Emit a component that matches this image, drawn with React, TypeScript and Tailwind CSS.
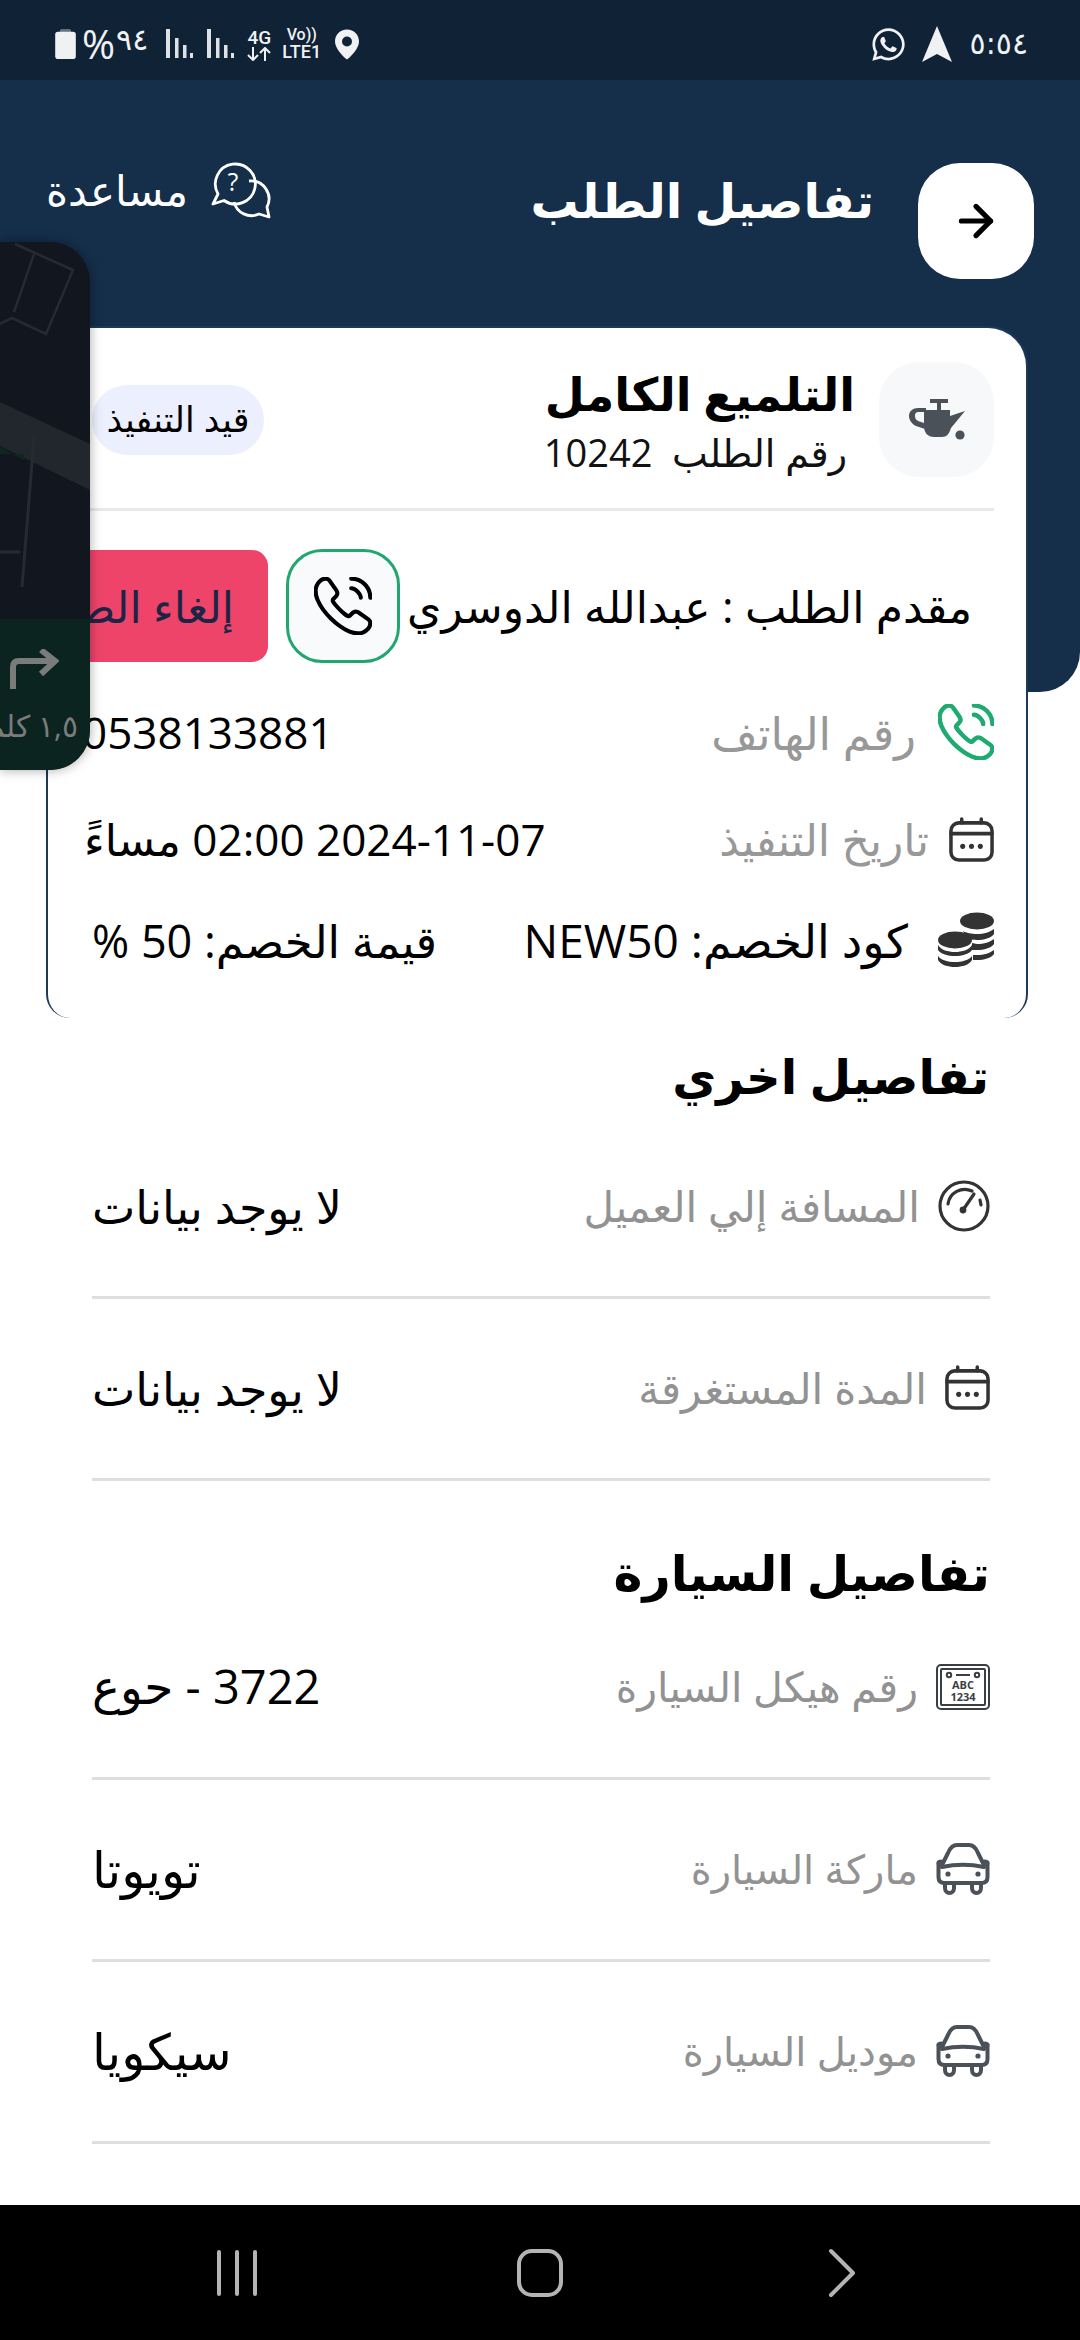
import type { ReactNode } from "react";
import { ArrowRight } from "lucide-react";
import { FaWhatsapp } from "react-icons/fa";

const font = "font-['Open_Sans','DejaVu_Sans',sans-serif]";

function Phone({ c, sw }: { c: string; sw: number }) {
  return (
    <svg viewBox="1.4 1.4 21.2 21.2" className={c} fill="none" stroke="currentColor" strokeWidth={sw} strokeLinecap="round" strokeLinejoin="round">
      <path d="M21.97 18.33c0 .36-.08.73-.25 1.09-.17.36-.39.7-.68 1.02-.49.54-1.03.93-1.64 1.18-.6.25-1.25.38-1.95.38-1.02 0-2.11-.24-3.26-.73s-2.3-1.15-3.44-1.98a28.75 28.75 0 0 1-3.28-2.8 28.414 28.414 0 0 1-2.79-3.27c-.82-1.14-1.48-2.28-1.96-3.41C2.24 8.67 2 7.58 2 6.54c0-.68.12-1.33.36-1.93.24-.61.62-1.17 1.15-1.67C4.15 2.31 4.85 2 5.59 2c.28 0 .56.06.81.18.26.12.49.3.67.56l2.32 3.27c.18.25.31.48.4.7.09.21.14.42.14.61 0 .24-.07.48-.21.71-.13.23-.32.47-.56.71l-.76.79c-.11.11-.16.24-.16.4 0 .08.01.15.03.23.03.08.06.14.08.2.18.33.49.76.93 1.28.45.52.93 1.05 1.45 1.58.54.53 1.06 1.02 1.59 1.47.52.44.95.74 1.29.92.05.02.11.05.18.08.08.03.16.04.25.04.17 0 .3-.06.41-.17l.76-.75c.25-.25.49-.44.72-.56.23-.14.46-.21.71-.21.19 0 .39.04.61.13.22.09.45.22.7.39l3.31 2.35c.26.18.44.39.55.64.1.25.16.5.16.78z" />
      <path d="M18.5 9c0-.6-.47-1.52-1.17-2.27-.64-.69-1.49-1.23-2.33-1.23M22 9c0-3.87-3.13-7-7-7" />
    </svg>
  );
}
function Calendar() {
  return (
    <svg viewBox="0 0 46 46" className="w-[45px] h-[45px]" fill="none" stroke="#333" strokeWidth="3.6" strokeLinecap="round">
      <rect x="2" y="6" width="42" height="38" rx="8" />
      <path d="M2 17h42M13 2v4M33 2v4" />
      <circle cx="14" cy="30" r="2.6" fill="#333" stroke="none" />
      <circle cx="23" cy="30" r="2.6" fill="#333" stroke="none" />
      <circle cx="32" cy="30" r="2.6" fill="#333" stroke="none" />
    </svg>
  );
}
function Coins() {
  return (
    <svg viewBox="0 0 56 56" className="w-[56px] h-[56px]" fill="#333">
      <ellipse cx="39" cy="9" rx="17" ry="8.5" />
      <path d="M25 19c3 2 9 3 14 3 7 0 13-2 17-5v5c-3 4-10 6-17 6-4 0-8-1-11-2zM34 31c2 0 3 1 5 1 7 0 13-2 17-5v5c-3 4-10 6-17 6h-5zM35 43h4c7 0 13-2 17-5v4c-3 4-10 6-17 6h-4z" />
      <ellipse cx="17" cy="28" rx="17" ry="8.5" />
      <path d="M0 33c3 5 10 7 17 7s14-2 17-7v5c-3 4-10 6-17 6S3 42 0 38zM0 44c3 4 10 6 17 6s14-2 17-6v4c-3 5-10 7-17 7S3 53 0 48z" />
    </svg>
  );
}
function Gauge() {
  return (
    <svg viewBox="0 0 52 52" className="w-[52px] h-[52px]" fill="none" stroke="#333" strokeWidth="3.2" strokeLinecap="round">
      <circle cx="26" cy="26" r="24" />
      <path d="M10 24a17 17 0 0 1 24-13M42 20l1 5" />
      <path d="M25 30 36 14" />
      <circle cx="25" cy="30" r="3.4" fill="#333" stroke="none" />
    </svg>
  );
}
function Plate() {
  return (
    <svg viewBox="0 0 54 46" className="w-[54px] h-[46px]" fill="none" stroke="#3a3f46" strokeWidth="2">
      <rect x="1" y="1" width="52" height="44" rx="4" />
      <rect x="5" y="5" width="44" height="36" rx="1" />
      <circle cx="13" cy="11" r="2.2" />
      <circle cx="41" cy="11" r="2.2" />
      <path d="M20 11h14" />
      <text x="27" y="25" textAnchor="middle" fontSize="11" fontWeight="700" fill="#3a3f46" stroke="none" fontFamily="'Open Sans',sans-serif">ABC</text>
      <text x="27" y="37" textAnchor="middle" fontSize="11" fontWeight="700" fill="#3a3f46" stroke="none" fontFamily="'Open Sans',sans-serif">1234</text>
    </svg>
  );
}
function Car() {
  return (
    <svg viewBox="0 0 54 52" className="w-[54px] h-[52px]" fill="none" stroke="#4b5159" strokeWidth="4" strokeLinejoin="round" strokeLinecap="round">
      <path d="M6 22 12 10c2-5 5-8 9-8h12c4 0 7 3 9 8l6 12" />
      <path d="M2.5 20c0-1 1-1.500 3-1.500M51.500 20c0-1-1-1.500-3-1.500" />
      <path d="M2.500 20v14c0 4 2 6 6 6h37c4 0 6-2 6-6V20" />
      <path d="M6 24c14-3 28-3 42 0" />
      <path d="M9 40v5c0 3 2 5 4.500 5S18 48 18 45v-5M36 40v5c0 3 2 5 4.500 5S45 48 45 45v-5" />
      <circle cx="12" cy="31" r="2.600" fill="#4b5159" stroke="none" />
      <circle cx="42" cy="31" r="2.600" fill="#4b5159" stroke="none" />
    </svg>
  );
}
function OilCan() {
  return (
    <svg viewBox="0 0 56 42" className="w-[56px] h-[42px]" fill="#4b5159">
      <path d="M21 0h18v4h-7v7h-4V4h-7z" />
      <path d="M15 11h26v6l15-5-14 17c-2 6-4 9-9 9H25c-6 0-10-4-10-11z" />
      <path fillRule="evenodd" d="M9 9h8v4h-7c-3 0-4 1-4 4 0 2 1 4 3 5l6 2 1 6-9-3C3 25 0 21 0 17c0-5 4-8 9-8z" />
      <circle cx="51" cy="36" r="4.600" />
    </svg>
  );
}
function ChatHelp() {
  return (
    <svg viewBox="0 0 62 62" className="w-[62px] h-[62px]" fill="none" stroke="#fff" strokeWidth="2.800" strokeLinejoin="round">
      <path d="M8 35 3 45 14 41.500A20 20 0 1 0 8 35z" />
      <path d="M39 22A18 18 0 0 1 57 48L59 58 49 55A18 18 0 0 1 24 43" />
      <text x="23" y="32" textAnchor="middle" fontSize="25" fill="#fff" stroke="none" fontFamily="'Open Sans',sans-serif">?</text>
    </svg>
  );
}
function Bars() {
  return (
    <svg viewBox="0 0 27 30" className="w-[27px] h-[30px]" fill="#dfe2e5">
      <rect width="4" height="29" x="0" />
      <rect width="3.500" height="20" x="9" y="9" />
      <rect width="3.500" height="13" x="17" y="16" />
      <rect width="3" height="5" x="24" y="24" />
    </svg>
  );
}
function Row({ icon, label, value, labelClass, valueClass }: { icon: ReactNode; label: string; value: ReactNode; labelClass: string; valueClass: string }) {
  return (
    <div className="h-[182px] border-b-[3px] border-[#dedede] flex items-center justify-between pb-[2px]">
      <div className="flex items-center gap-[18px]">
        {icon}
        <span className={`${labelClass} text-[#929292] leading-none`}>{label}</span>
      </div>
      <span className={`${valueClass} text-black leading-none`}>{value}</span>
    </div>
  );
}

export default function App() {
  return (
    <div dir="rtl" className={`relative w-[1080px] h-[2340px] overflow-hidden bg-white flex flex-col ${font}`}>
      <div dir="ltr" className="h-[80px] shrink-0 bg-[#102236] flex items-center justify-between pl-[55px] pr-[52px] pt-[8px] text-[#eff1f3]">
        <div className="flex items-center">
          <svg viewBox="0 0 22 32" className="w-[21px] h-[30px]"><rect x="5" y="0" width="12" height="6" rx="2" fill="#66717c" /><rect y="3" width="22" height="29" rx="3" fill="#eff1f3" /></svg>
          <span className="text-[40px] leading-none ml-[6px]">%</span>
          <span className="text-[30px] leading-none font-['DejaVu_Sans',sans-serif] ml-[1px] -mt-[8px]">٩٤</span>
          <div className="ml-[18px]"><Bars /></div>
          <div className="ml-[14px]"><Bars /></div>
          <div className="ml-[12px] w-[26px] flex flex-col items-center font-['Roboto',sans-serif] font-medium text-[19px] leading-[19px]">
            <span>4G</span>
            <svg viewBox="0 0 26 14" className="w-[26px] h-[14px]" fill="none" stroke="#eff1f3" strokeWidth="2"><path d="M7 0v13M2 8l5 5 5-5M19 14V1M14 6l5-5 5 5" /></svg>
          </div>
          <div className="ml-[10px] flex flex-col items-center font-['Roboto',sans-serif] font-medium text-[18px] leading-[18px]">
            <span className="text-[16px] leading-[16px]">Vo))</span>
            <span>LTE1</span>
          </div>
          <svg viewBox="0 0 24 30" className="w-[24px] h-[31px] ml-[14px]"><path fillRule="evenodd" fill="#eff1f3" d="M12 0C5 0 0 5 0 12c0 7 8 15 12 18 4-3 12-11 12-18C24 5 19 0 12 0zm0 7a5 5 0 1 1 0 10 5 5 0 0 1 0-10z" /></svg>
        </div>
        <div className="flex items-center">
          <FaWhatsapp className="w-[37px] h-[37px]" />
          <svg viewBox="0 0 30 36" className="w-[30px] h-[36px] ml-[15px]"><path fill="#eff1f3" d="M15 0 30 36 15 28 0 36z" /></svg>
          <span className="text-[30px] leading-none ml-[18px] font-['DejaVu_Sans',sans-serif]">٥:٥٤</span>
        </div>
      </div>

      <div className="h-[612px] shrink-0 bg-[#152e4a] rounded-br-[40px] pt-[83px] pr-[46px] pl-[46px]">
        <div className="flex items-start justify-between">
          <div className="flex items-center gap-[44px]">
            <div className="w-[116px] h-[116px] bg-white rounded-[42px] flex items-center justify-center">
              <ArrowRight className="w-[50px] h-[50px] text-black" strokeWidth={2.500} />
            </div>
            <span className="text-[48px] font-bold text-white leading-none -mt-[42px]">تفاصيل الطلب</span>
          </div>
          <div className="flex items-center gap-[22px] -mt-[4px]">
            <ChatHelp />
            <span className="text-[42px] text-white leading-none">مساعدة</span>
          </div>
        </div>
      </div>

      <div className="relative -mt-[366px] ml-[46px] mr-[52px] h-[692px] shrink-0 bg-white border-2 border-[#1c3a58] border-b-0 rounded-t-[40px] rounded-b-[24px] overflow-hidden pt-[36px] pr-[32px] pl-[32px]">
        <div className="flex items-center justify-between border-b-[3px] border-[#e9e9e9] h-[147px] pb-[33px]">
          <div className="flex items-center gap-[24px]">
            <div className="w-[115px] h-[115px] rounded-[40px] bg-[#f6f8fa] flex items-center justify-center"><OilCan /></div>
            <div className="flex flex-col mt-[3px]">
              <span className="text-[46px] font-bold text-black leading-[56px]">التلميع الكامل</span>
              <span className="text-[38px] text-[#111] leading-[50px] pr-[8px] mt-[6px]">رقم الطلب &nbsp;10242</span>
            </div>
          </div>
          <div className="w-[172px] h-[70px] ml-[12px] rounded-full bg-[#ecf0fe] flex items-center justify-center text-[35px] text-black whitespace-nowrap">قيد التنفيذ</div>
        </div>

        <div className="flex items-center h-[114px] mt-[38px] pr-[22px] whitespace-nowrap">
          <span className="text-[44px] text-black leading-none">مقدم الطلب : عبدالله الدوسري</span>
          <div className="w-[114px] h-[114px] mr-[7px] shrink-0 rounded-[36px] border-[3px] border-[#22a66f] bg-[#f8fafc] flex items-center justify-center text-black">
            <Phone c="w-[58px] h-[58px]" sw={1.500} />
          </div>
          <div className="w-[230px] h-[112px] mr-[18px] shrink-0 rounded-[16px] bg-[#ee446a] flex items-center pr-[34px] text-[44px] text-[#1d2547] leading-none">إلغاء الطلب</div>
        </div>

        <div className="flex items-center justify-between h-[56px] mt-[41px] pl-[2px]">
          <div className="flex items-center gap-[22px] text-[#1eab6f]">
            <Phone c="w-[56px] h-[56px]" sw={1.700} />
            <span className="text-[45px] text-[#989898] leading-none">رقم الهاتف</span>
          </div>
          <span className="text-[44px] text-black leading-none">0538133881</span>
        </div>

        <div className="flex items-center justify-between h-[50px] mt-[54px] pl-[4px]">
          <div className="flex items-center gap-[20px]">
            <Calendar />
            <span className="text-[44px] text-[#989898] leading-none">تاريخ التنفيذ</span>
          </div>
          <span className="text-[44px] text-black leading-none whitespace-nowrap">
            <span dir="ltr">2024-11-07</span> 02:00 مساءً
          </span>
        </div>

        <div className="flex items-center justify-between h-[56px] mt-[48px] pl-[12px]">
          <div className="flex items-center gap-[30px]">
            <Coins />
            <span className="text-[46px] text-black leading-none">كود الخصم: NEW50</span>
          </div>
          <span className="text-[45px] text-black leading-none">قيمة الخصم: 50 %</span>
        </div>
      </div>

      <div className="flex-1 pl-[92px] pr-[90px] pt-[24px] flex flex-col">
        <h2 className="text-[48px] font-bold text-black leading-[68px] pr-[1px]">تفاصيل اخري</h2>
        <div className="mt-[7px]">
          <Row icon={<Gauge />} label="المسافة إلي العميل" value="لا يوجد بيانات" labelClass="text-[42px]" valueClass="text-[46px]" />
          <Row icon={<Calendar />} label="المدة المستغرقة" value="لا يوجد بيانات" labelClass="text-[42px]" valueClass="text-[46px]" />
        </div>
        <h2 className="text-[49px] font-bold text-black leading-[68px] mt-[57px]">تفاصيل السيارة</h2>
        <div className="-mt-[8px]">
          <Row icon={<Plate />} label="رقم هيكل السيارة" value="3722 - حوع" labelClass="text-[41px]" valueClass="text-[47px]" />
          <Row icon={<Car />} label="ماركة السيارة" value="تويوتا" labelClass="text-[40px]" valueClass="text-[50px]" />
          <Row icon={<Car />} label="موديل السيارة" value="سيكويا" labelClass="text-[40px]" valueClass="text-[50px]" />
        </div>
      </div>

      <div dir="ltr" className="h-[135px] shrink-0 bg-black">
        <svg viewBox="0 0 1080 135" className="w-[1080px] h-[135px]" fill="none" stroke="#b4b4b4" strokeWidth="4" strokeLinecap="round">
          <path d="M219 47v42M237 47v42M255 47v42" />
          <rect x="519" y="46" width="42" height="44" rx="13" />
          <path d="M831 46 853 68 831 90" strokeLinejoin="round" />
        </svg>
      </div>

      <div dir="ltr" className="absolute left-0 top-[242px] w-[90px] h-[528px] rounded-r-[40px] overflow-hidden bg-[#12161e] shadow-[0_0_12px_rgba(0,0,0,0.35)] flex flex-col">
        <div className="h-[377px] shrink-0">
          <svg viewBox="0 0 90 377" className="w-[90px] h-[377px]" fill="none">
            <path d="M0 160v44l90 44v-46z" fill="#22272e" />
            <path d="M0 205 24 218v-6H0z" fill="#0e2820" />
            <path d="M15 2 73 28 46 92 12 76 0 82M34 12 14 70" stroke="#262b33" strokeWidth="2.500" />
            <path d="M34 196 22 345M0 310h20" stroke="#262b33" strokeWidth="3" />
          </svg>
        </div>
        <div className="flex-1 bg-[#0b2420] flex flex-col items-start">
          <svg viewBox="0 0 50 40" className="w-[50px] h-[40px] ml-[9px] mt-[30px]" fill="none" stroke="#7a7c7b" strokeWidth="6"><path d="M4 40V18c0-4 2-6 6-6h34" /><path d="M32 1 46 12 32 25" /></svg>
          <div dir="rtl" className="text-[30px] text-[#7a7c7b] whitespace-nowrap w-[78px] mt-[14px] flex justify-start overflow-hidden">١,٥ كلم</div>
        </div>
      </div>
    </div>
  );
}
